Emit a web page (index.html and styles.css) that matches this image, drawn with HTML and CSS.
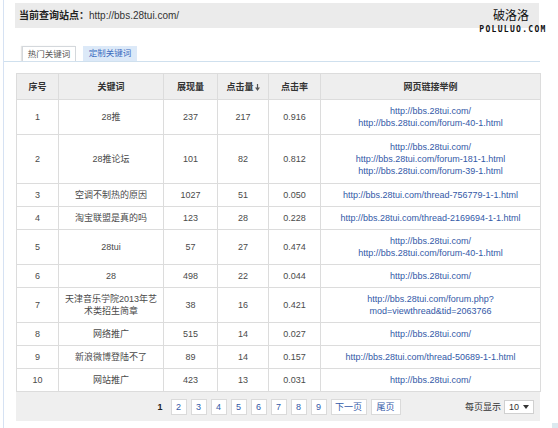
FILE: index.html
```html
<!DOCTYPE html>
<html lang="zh-CN">
<head>
<meta charset="utf-8">
<title>关键词查询</title>
<link rel="stylesheet" href="styles.css">
</head>
<body>
<div class="page">
  <div class="site-bar"><b>当前查询站点：</b>http://bbs.28tui.com/</div>
  <div class="tabs">
    <span class="tab active">热门关键词</span>
    <span class="tab custom">定制关键词</span>
  </div>
  <table class="kw">
    <colgroup>
      <col class="c1"><col class="c2"><col class="c3"><col class="c4"><col class="c5"><col class="c6">
    </colgroup>
    <thead>
      <tr>
        <th>序号</th><th>关键词</th><th>展现量</th>
        <th>点击量<svg class="arrow" width="5" height="7" viewBox="0 0 5 7"><path d="M2.5 0v4.5" stroke="#555" stroke-width="1.2"/><path d="M0 3.5h5L2.5 7z" fill="#555"/></svg></th>
        <th>点击率</th><th>网页链接举例</th>
      </tr>
    </thead>
    <tbody>
      <tr><td>1</td><td>28推</td><td>237</td><td>217</td><td>0.916</td><td class="links"><a>http://bbs.28tui.com/</a><br><a>http://bbs.28tui.com/forum-40-1.html</a></td></tr>
      <tr class="tall"><td>2</td><td>28推论坛</td><td>101</td><td>82</td><td>0.812</td><td class="links"><a>http://bbs.28tui.com/</a><br><a>http://bbs.28tui.com/forum-181-1.html</a><br><a>http://bbs.28tui.com/forum-39-1.html</a></td></tr>
      <tr><td>3</td><td>空调不制热的原因</td><td>1027</td><td>51</td><td>0.050</td><td class="links"><a>http://bbs.28tui.com/thread-756779-1-1.html</a></td></tr>
      <tr><td>4</td><td>淘宝联盟是真的吗</td><td>123</td><td>28</td><td>0.228</td><td class="links"><a>http://bbs.28tui.com/thread-2169694-1-1.html</a></td></tr>
      <tr><td>5</td><td>28tui</td><td>57</td><td>27</td><td>0.474</td><td class="links"><a>http://bbs.28tui.com/</a><br><a>http://bbs.28tui.com/forum-40-1.html</a></td></tr>
      <tr><td>6</td><td>28</td><td>498</td><td>22</td><td>0.044</td><td class="links"><a>http://bbs.28tui.com/</a></td></tr>
      <tr><td>7</td><td>天津音乐学院2013年艺<br>术类招生简章</td><td>38</td><td>16</td><td>0.421</td><td class="links"><a>http://bbs.28tui.com/forum.php?<br>mod=viewthread&amp;tid=2063766</a></td></tr>
      <tr><td>8</td><td>网络推广</td><td>515</td><td>14</td><td>0.027</td><td class="links"><a>http://bbs.28tui.com/</a></td></tr>
      <tr><td>9</td><td>新浪微博登陆不了</td><td>89</td><td>14</td><td>0.157</td><td class="links"><a>http://bbs.28tui.com/thread-50689-1-1.html</a></td></tr>
      <tr><td>10</td><td>网站推广</td><td>423</td><td>13</td><td>0.031</td><td class="links"><a>http://bbs.28tui.com/</a></td></tr>
    </tbody>
  </table>
  <div class="pager">
    <div></div>
    <div class="pages">
      <span class="cur">1</span>
      <a class="pg">2</a><a class="pg">3</a><a class="pg">4</a><a class="pg">5</a><a class="pg">6</a><a class="pg">7</a><a class="pg">8</a><a class="pg">9</a>
      <a class="pg wide">下一页</a><a class="pg mid">尾页</a>
    </div>
    <div class="per">每页显示<span class="select">10<svg width="6" height="4" viewBox="0 0 6 4"><path d="M0 0h6L3 4z" fill="#333"/></svg></span></div>
  </div>
</div>
<div class="mark">
  <div class="mark-cn">破洛洛</div>
  <div class="mark-en">POLULUO.COM</div>
</div>
<div class="corner"></div>
</body>
</html>
```

FILE: styles.css
```css
html, body {
  margin: 0;
  padding: 0;
  background: #fff;
}
body {
  font-family: "Liberation Sans", "Noto Sans CJK SC", sans-serif;
  font-size: 9px;
  color: #4a4a4a;
  width: 558px;
  height: 428px;
  overflow: hidden;
  position: relative;
}
.page {
  margin-left: 3px;
  border-left: 1px solid #d6e2f3;
  padding: 3px 18px 0 0;
  height: 425px;
  width: 536px;
}
.site-bar {
  margin-left: 11px;
  height: 25px;
  background: #ebebeb;
  font-size: 10px;
  line-height: 25px;
  padding-left: 4px;
  color: #333;
  width: 520px;
}
.site-bar b {
  font-weight: bold;
  color: #222;
}
.tabs {
  margin-top: 18px;
  padding-left: 18px;
  display: flex;
  gap: 7px;
  border-bottom: 1px solid #cfe0ee;
  height: 15px;
  width: 518px;
}
.tab {
  width: 54px;
  height: 15px;
  box-sizing: border-box;
  text-align: center;
  line-height: 15px;
  font-size: 8.5px;
}
.tab.active {
  background: #fff;
  border: 1px solid #d4d8dc;
  border-bottom: none;
  color: #555;
  box-shadow: -1px 0 1px #e4e4e4;
}
.tab.custom {
  background: #dce9f8;
  color: #3a6bbf;
}
.kw {
  margin: 11px 0 0 12px;
  border-collapse: collapse;
  table-layout: fixed;
  width: 524px;
  text-align: center;
}
.c1 { width: 42px; }
.c2 { width: 105px; }
.c3 { width: 54px; }
.c4 { width: 51px; }
.c5 { width: 52px; }
.c6 { width: 220px; }
.kw th, .kw td {
  border: 1px solid #dcdcdc;
  line-height: 12px;
}
.kw th {
  background: #eeeeee;
  font-weight: bold;
  color: #333;
  padding: 7px 2px 6px;
}
.kw td {
  padding: 5px 2px;
}
.kw tr.tall td {
  padding: 6px 2px;
}
.arrow {
  margin-left: 1px;
  vertical-align: -1px;
}
.links a {
  color: #3359a7;
  text-decoration: none;
}
.pager {
  margin-left: 12px;
  width: 524px;
  height: 29px;
  background: #efefef;
  display: grid;
  grid-template-columns: 1fr auto 1fr;
  align-items: center;
}
.pages {
  display: flex;
  align-items: center;
  gap: 4px;
}
.cur {
  font-weight: bold;
  color: #222;
  margin-right: 4px;
  padding-left: 2px;
}
.pg {
  width: 16px;
  height: 16px;
  box-sizing: border-box;
  background: #fff;
  border: 1px solid #dadada;
  color: #3359a7;
  text-align: center;
  line-height: 14px;
}
.pg.wide { width: 36px; }
.pg.mid { width: 30px; }
.per {
  justify-self: end;
  padding-right: 6px;
  display: flex;
  align-items: center;
  gap: 3px;
  color: #333;
}
.select {
  width: 30px;
  height: 14px;
  box-sizing: border-box;
  border: 1px solid #d0d0d0;
  background: #fff;
  display: flex;
  align-items: center;
  justify-content: space-between;
  padding: 0 4px 0 4px;
  line-height: 12px;
}
.mark {
  position: absolute;
  left: 476px;
  top: 6px;
  width: 74px;
  text-align: center;
}
.mark-cn {
  font-family: "Noto Sans CJK SC", sans-serif;
  font-size: 12px;
  line-height: 17px;
  color: #111;
  padding-right: 4px;
}
.mark-en {
  font-family: "DejaVu Sans Mono", monospace;
  font-weight: bold;
  font-size: 8px;
  line-height: 8px;
  letter-spacing: 1.3px;
  color: #111;
  margin-top: 3px;
}
.corner {
  position: absolute;
  left: 552px;
  top: 423px;
  width: 6px;
  height: 5px;
  background: #dbe9ef;
}
```
